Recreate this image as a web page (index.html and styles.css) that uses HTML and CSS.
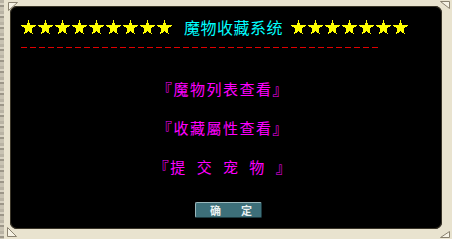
FILE: index.html
```html
<!DOCTYPE html>
<html lang="zh">
<head>
<meta charset="utf-8">
<link rel="stylesheet" href="styles.css">
</head>
<body>
<div class="frame">
  <div class="stone"></div>
  <div class="panel">
    <div class="header">
      <div class="stars">
        <svg class="star" viewBox="0 0 15 15"><polygon points="7.5,0 9.3,5.4 15,5.5 10.4,8.9 12.1,14.5 7.5,11.1 2.9,14.5 4.6,8.9 0,5.5 5.7,5.4"/></svg>
        <svg class="star" viewBox="0 0 15 15"><polygon points="7.5,0 9.3,5.4 15,5.5 10.4,8.9 12.1,14.5 7.5,11.1 2.9,14.5 4.6,8.9 0,5.5 5.7,5.4"/></svg>
        <svg class="star" viewBox="0 0 15 15"><polygon points="7.5,0 9.3,5.4 15,5.5 10.4,8.9 12.1,14.5 7.5,11.1 2.9,14.5 4.6,8.9 0,5.5 5.7,5.4"/></svg>
        <svg class="star" viewBox="0 0 15 15"><polygon points="7.5,0 9.3,5.4 15,5.5 10.4,8.9 12.1,14.5 7.5,11.1 2.9,14.5 4.6,8.9 0,5.5 5.7,5.4"/></svg>
        <svg class="star" viewBox="0 0 15 15"><polygon points="7.5,0 9.3,5.4 15,5.5 10.4,8.9 12.1,14.5 7.5,11.1 2.9,14.5 4.6,8.9 0,5.5 5.7,5.4"/></svg>
        <svg class="star" viewBox="0 0 15 15"><polygon points="7.5,0 9.3,5.4 15,5.5 10.4,8.9 12.1,14.5 7.5,11.1 2.9,14.5 4.6,8.9 0,5.5 5.7,5.4"/></svg>
        <svg class="star" viewBox="0 0 15 15"><polygon points="7.5,0 9.3,5.4 15,5.5 10.4,8.9 12.1,14.5 7.5,11.1 2.9,14.5 4.6,8.9 0,5.5 5.7,5.4"/></svg>
        <svg class="star" viewBox="0 0 15 15"><polygon points="7.5,0 9.3,5.4 15,5.5 10.4,8.9 12.1,14.5 7.5,11.1 2.9,14.5 4.6,8.9 0,5.5 5.7,5.4"/></svg>
        <svg class="star" viewBox="0 0 15 15"><polygon points="7.5,0 9.3,5.4 15,5.5 10.4,8.9 12.1,14.5 7.5,11.1 2.9,14.5 4.6,8.9 0,5.5 5.7,5.4"/></svg>
      </div>
      <div class="title">魔物收藏系统</div>
      <div class="stars">
        <svg class="star" viewBox="0 0 15 15"><polygon points="7.5,0 9.3,5.4 15,5.5 10.4,8.9 12.1,14.5 7.5,11.1 2.9,14.5 4.6,8.9 0,5.5 5.7,5.4"/></svg>
        <svg class="star" viewBox="0 0 15 15"><polygon points="7.5,0 9.3,5.4 15,5.5 10.4,8.9 12.1,14.5 7.5,11.1 2.9,14.5 4.6,8.9 0,5.5 5.7,5.4"/></svg>
        <svg class="star" viewBox="0 0 15 15"><polygon points="7.5,0 9.3,5.4 15,5.5 10.4,8.9 12.1,14.5 7.5,11.1 2.9,14.5 4.6,8.9 0,5.5 5.7,5.4"/></svg>
        <svg class="star" viewBox="0 0 15 15"><polygon points="7.5,0 9.3,5.4 15,5.5 10.4,8.9 12.1,14.5 7.5,11.1 2.9,14.5 4.6,8.9 0,5.5 5.7,5.4"/></svg>
        <svg class="star" viewBox="0 0 15 15"><polygon points="7.5,0 9.3,5.4 15,5.5 10.4,8.9 12.1,14.5 7.5,11.1 2.9,14.5 4.6,8.9 0,5.5 5.7,5.4"/></svg>
        <svg class="star" viewBox="0 0 15 15"><polygon points="7.5,0 9.3,5.4 15,5.5 10.4,8.9 12.1,14.5 7.5,11.1 2.9,14.5 4.6,8.9 0,5.5 5.7,5.4"/></svg>
        <svg class="star" viewBox="0 0 15 15"><polygon points="7.5,0 9.3,5.4 15,5.5 10.4,8.9 12.1,14.5 7.5,11.1 2.9,14.5 4.6,8.9 0,5.5 5.7,5.4"/></svg>
      </div>
    </div>
    <div class="dashes"></div>
    <div class="menu">
      <div class="item">『魔物列表查看』</div>
      <div class="item">『收藏屬性查看』</div>
      <div class="item spaced">『提 交 宠 物 』</div>
    </div>
    <div class="actions">
      <button class="btn"><span>确</span><span>定</span></button>
    </div>
  </div>
  <svg class="corner tl" viewBox="0 0 10 9"><polygon points="0.5,0.5 9.5,0.5 0.5,8.5" fill="#f6f2e4" stroke="#8a8270" stroke-width="1"/></svg>
  <svg class="corner tr" viewBox="0 0 10 8"><polygon points="0.5,0.5 9.5,0.5 9.5,7.5" fill="#f6f2e4" stroke="#8a8270" stroke-width="1"/></svg>
  <svg class="corner bl" viewBox="0 0 10 10"><polygon points="0.5,0.5 9.5,9.5 0.5,9.5" fill="#f6f2e4" stroke="#8a8270" stroke-width="1"/></svg>
  <svg class="corner br" viewBox="0 0 10 7"><polygon points="9.5,0.5 9.5,6.5 0.5,6.5" fill="#f6f2e4" stroke="#8a8270" stroke-width="1"/></svg>
</div>
</body>
</html>
```

FILE: styles.css
```css
html, body {
  margin: 0;
  padding: 0;
  background: #000;
}

.frame {
  position: relative;
  width: 452px;
  height: 239px;
  box-sizing: border-box;
  display: flex;
  padding: 6px 10px 10px 0;
  background: #e9e3cf;
  overflow: hidden;
}

.stone {
  width: 4px;
  margin: -6px 6px -10px 0;
  background:
    repeating-linear-gradient(180deg, #b9b3a4 0 3px, #d8d2c2 3px 5px, #9c9688 5px 7px, #c8c2b2 7px 11px);
}

.panel {
  flex: 1;
  display: flex;
  flex-direction: column;
  background: #000;
  border-radius: 7px;
  box-shadow: inset 0 0 0 1px #3a3528;
  font-family: "Noto Sans CJK SC", "Noto Sans CJK TC", sans-serif;
}

.header {
  display: flex;
  align-items: center;
  height: 16px;
  padding: 13px 0 0 11px;
}

.stars {
  display: flex;
  gap: 2px;
}

.star {
  width: 15px;
  height: 15px;
  fill: #ffff00;
  shape-rendering: crispEdges;
}

.title {
  color: #00ffff;
  font-size: 16px;
  line-height: 16px;
  letter-spacing: 0.5px;
  margin: 0 8px 0 12px;
}

.dashes {
  height: 1px;
  width: 357px;
  margin: 12px 0 0 11px;
  background: repeating-linear-gradient(90deg, #e00000 0 6px, #000 6px 9px);
}

.menu {
  display: flex;
  flex-direction: column;
  align-items: center;
  gap: 23px;
  margin-top: 33px;
  padding-right: 6px;
}

.item {
  color: #ff00ff;
  font-size: 15px;
  line-height: 16px;
  letter-spacing: 1.5px;
  white-space: pre;
}

.item.spaced {
  word-spacing: 5px;
}

.actions {
  display: flex;
  justify-content: center;
  padding-left: 5px;
  margin-top: 27px;
}

.btn {
  display: flex;
  justify-content: space-between;
  align-items: center;
  width: 67px;
  height: 16px;
  padding: 0 9px 0 14px;
  box-sizing: border-box;
  background: #3d6f79;
  border: 1px solid #9bb8bc;
  border-right-color: #1c3a40;
  border-bottom-color: #1c3a40;
  border-radius: 2px;
  color: #e8f0f0;
  font-family: "Noto Sans CJK SC", sans-serif;
  font-size: 11px;
  line-height: 12px;
  font-weight: bold;
}

.corner {
  position: absolute;
  display: block;
}

.corner.tl { left: 8px; top: 2px; width: 10px; height: 9px; }
.corner.tr { left: 440px; top: 1px; width: 10px; height: 8px; }
.corner.bl { left: 7px; top: 227px; width: 10px; height: 10px; }
.corner.br { left: 440px; top: 231px; width: 10px; height: 7px; }
```
